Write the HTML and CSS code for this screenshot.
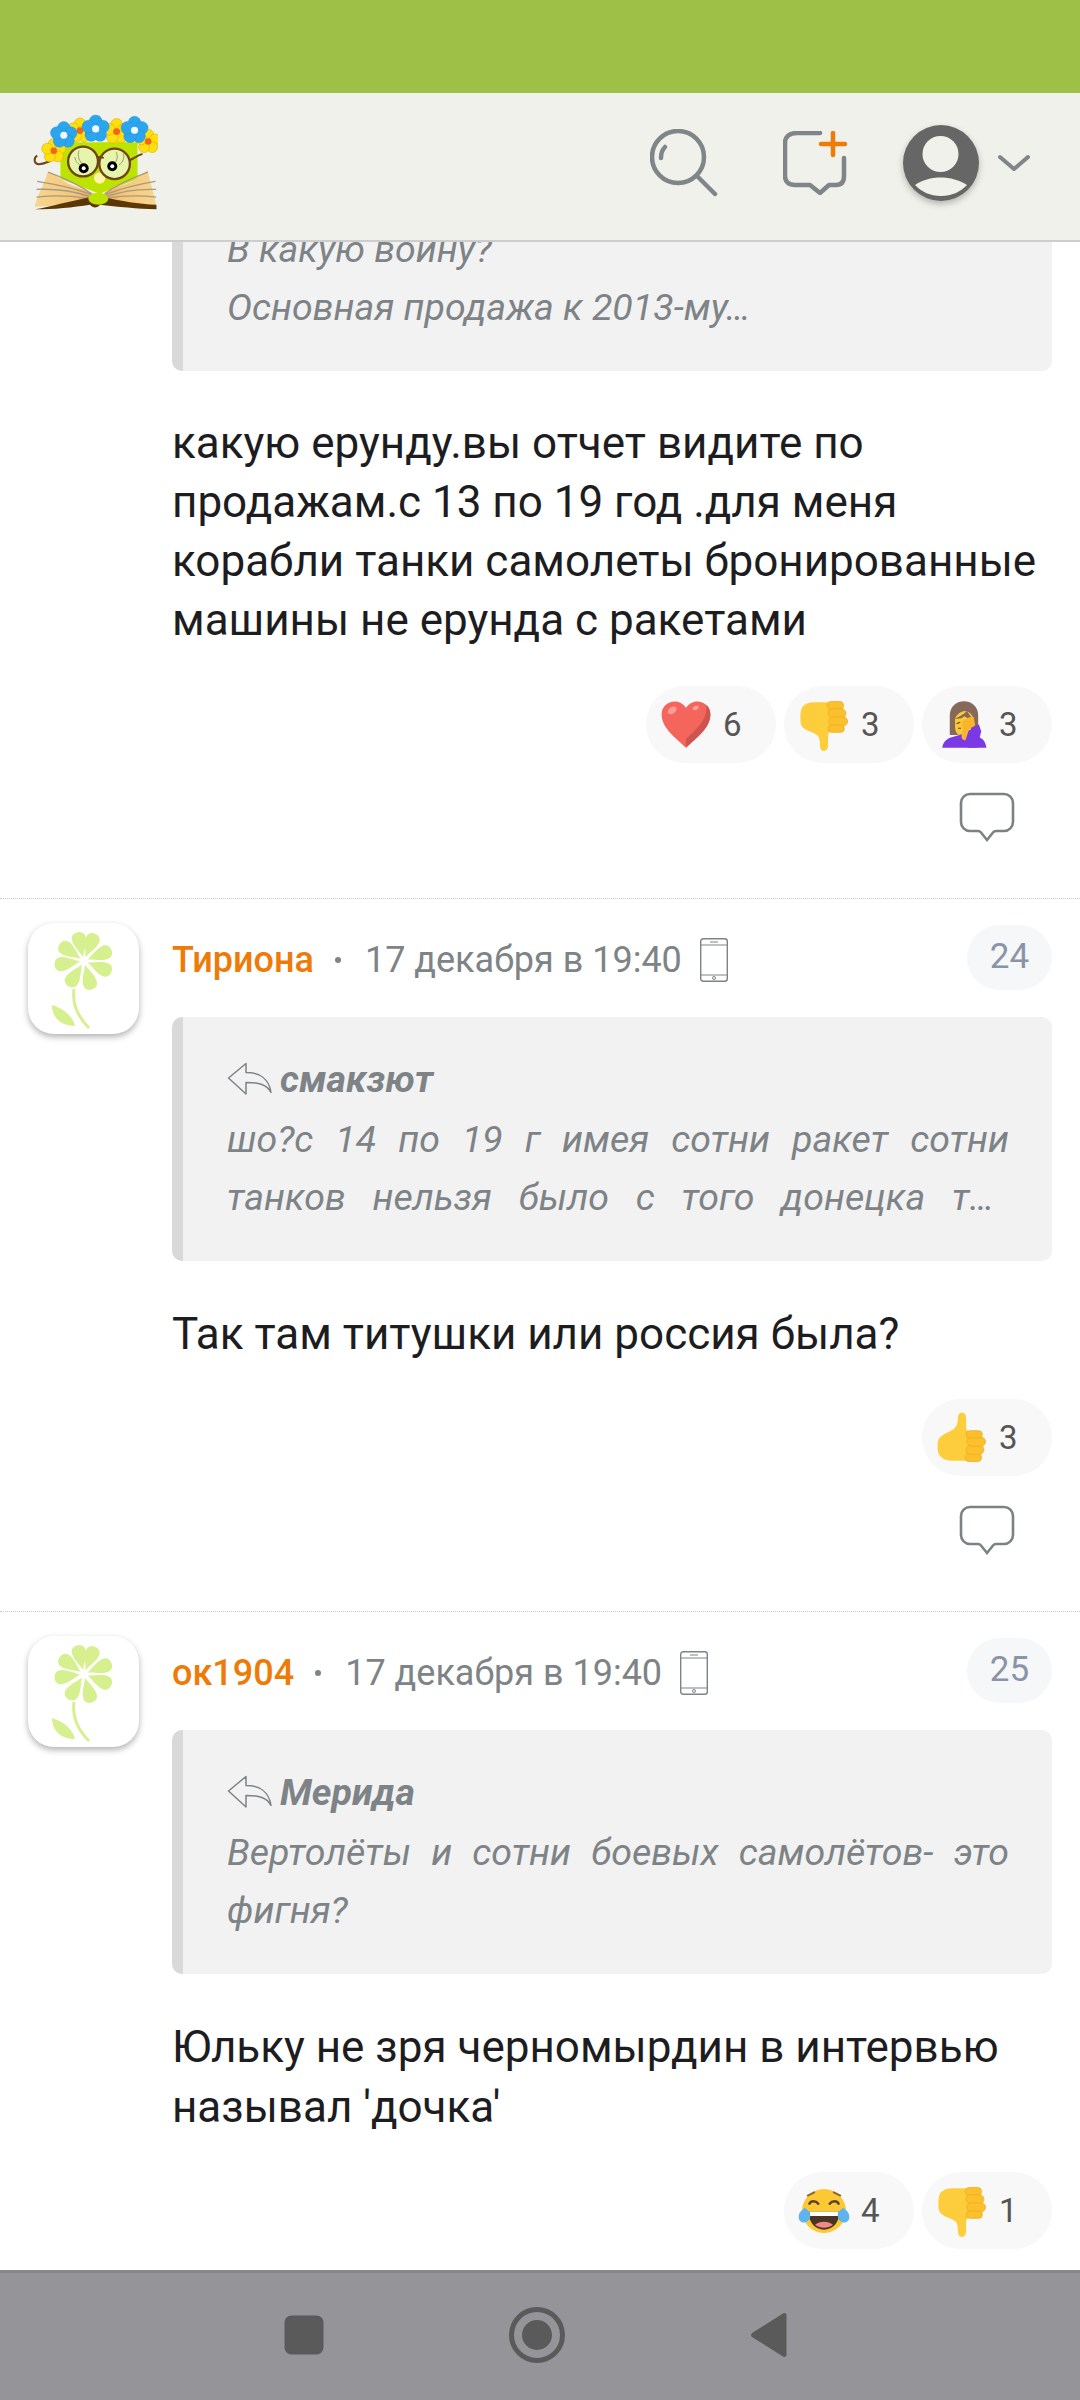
FILE: index.html
```html
<!DOCTYPE html>
<html lang="ru">
<head>
<meta charset="utf-8">
<title>Комментарии</title>
<link rel="stylesheet" href="styles.css">
</head>
<body>
<svg class="defs" width="0" height="0" aria-hidden="true">
  <defs>
    <linearGradient id="pageL" x1="0" x2="1" y1="0" y2="0"><stop offset="0" stop-color="#f7d68e"/><stop offset="0.6" stop-color="#f6c67a"/><stop offset="1" stop-color="#f49a3c"/></linearGradient>
    <linearGradient id="pageR" x1="1" x2="0" y1="0" y2="0"><stop offset="0" stop-color="#f7d68e"/><stop offset="0.6" stop-color="#f6c67a"/><stop offset="1" stop-color="#f49a3c"/></linearGradient>
    <symbol id="fl-blue" viewBox="-40 -40 80 80">
      <g fill="#2aa5ee" stroke="#1d8fd6" stroke-width="1"><circle cx="0" cy="-19" r="16"/><circle cx="18" cy="-6" r="16"/><circle cx="11" cy="15" r="16"/><circle cx="-11" cy="15" r="16"/><circle cx="-18" cy="-6" r="16"/></g>
      <circle r="9" fill="#f4fbff"/>
    </symbol>
    <symbol id="fl-yel" viewBox="-40 -40 80 80">
      <g fill="#ffdf10" stroke="#d9a900" stroke-width="1.5"><circle cx="0" cy="-19" r="15"/><circle cx="18" cy="-6" r="15"/><circle cx="11" cy="15" r="15"/><circle cx="-11" cy="15" r="15"/><circle cx="-18" cy="-6" r="15"/></g>
      <circle r="9" fill="#f0661a"/>
    </symbol>
    <symbol id="i-down" viewBox="0 0 64 64">
      <path d="M6 9c3-3 8-5 14-5h21c3 0 5 2 5 4v25l-5 5c-2 2-4 4-4 8v11c0 4-2 7-5 7-4 0-5-4-5-8 0-6-1-10-4-12-6-4-13-5-17-9-3-3-3-7-3-12 0-5 0-10 3-14z" fill="#fdcd3c"/>
      <g fill="#fbc02d" stroke="#f2ae1f" stroke-width="1"><rect x="36" y="3" width="20" height="10" rx="5"/><rect x="37" y="12" width="22" height="11" rx="5.5"/><rect x="38" y="22" width="23" height="11" rx="5.5"/><rect x="37" y="32" width="20" height="9" rx="4.5"/></g>
    </symbol>
    <symbol id="i-up" viewBox="0 0 64 64">
      <path d="M6 55c3 3 8 5 14 5h21c3 0 5-2 5-4V31l-5-5c-3-3-4-5-4-9V7c0-4-2-6-5-6-4 0-5 3-5 7 0 6-2 10-5 13-6 4-13 6-17 10-3 3-3 7-3 11 0 5 0 9 4 13z" fill="#fdcd3c"/>
      <g fill="#fbc02d" stroke="#f2ae1f" stroke-width="1"><rect x="36" y="51" width="20" height="10" rx="5"/><rect x="37" y="41" width="22" height="11" rx="5.5"/><rect x="38" y="31" width="23" height="11" rx="5.5"/><rect x="37" y="23" width="20" height="9" rx="4.5"/></g>
    </symbol>
    <symbol id="i-chat" viewBox="0 0 56 52">
      <path d="M11 2h34a9 9 0 0 1 9 9v19a9 9 0 0 1-9 9h-8a4 4 0 0 0-3 1.5L28 48l-6-7.500a4 4 0 0 0-3-1.500h-8a9 9 0 0 1-9-9V11a9 9 0 0 1 9-9z" fill="none" stroke="#7b8284" stroke-width="2.600"/>
    </symbol>
    <symbol id="i-phone" viewBox="0 0 28 44">
      <rect x="0.700" y="0.700" width="26.600" height="42.600" rx="2.500" fill="none" stroke="#7d8386" stroke-width="1.400"/>
      <path d="M1 7h26M1 37h26M10 4h8" fill="none" stroke="#7d8386" stroke-width="1.200"/>
      <circle cx="14" cy="40" r="1.500" fill="none" stroke="#7d8386"/>
    </symbol>
    <symbol id="i-reply" viewBox="0 0 46 34">
      <path d="M1.500 16 19 1.500v9c13 0 23 6 25 20-4-8-12-10-25-10v11.500z" fill="none" stroke="#7d8386" stroke-width="1.500" stroke-linejoin="round"/>
    </symbol>
    <path id="petal" d="M0-4C-2-10-7.500-17-7-24-6.500-31.500 6.500-31.500 7-24 7.500-17 2-10 0-4z" fill="#d7f08f"/>
    <symbol id="i-flower" viewBox="0 0 111 111">
      <g transform="translate(56 38)">
        <use href="#petal" transform="rotate(-13)"/>
        <use href="#petal" transform="rotate(22)"/>
        <use href="#petal" transform="rotate(68)"/>
        <use href="#petal" transform="rotate(112)"/>
        <use href="#petal" transform="rotate(165)"/>
        <use href="#petal" transform="rotate(212)"/>
        <use href="#petal" transform="rotate(262)"/>
        <use href="#petal" transform="rotate(305)"/>
      </g>
      <path d="M46 66c-2 15 4 28 15 39" fill="none" stroke="#d7f08f" stroke-width="3"/>
      <path d="M24 82c13 4 21 12 23 21-13 0-23-7-23-21z" fill="#d7f08f"/>
    </symbol>
  </defs>
</svg>

<div class="statusbar"></div>

<header class="topbar">
  <svg class="logo" viewBox="40 65 375 295" width="125" height="98" role="img" aria-label="Логотип">
    <path d="M52 190c-12 8-10 26 5 26 14 0 24-6 36-10" fill="none" stroke="#6e4513" stroke-width="6"/>
    <path d="M122 150h232v110l-114 45-118-45z" fill="#bde400"/>
    <path d="M45 345c3-30 30-70 38-105 30 10 42 25 72 39 30 13 65 20 85 40-30 0-60 10-85 18-40 5-80 5-110 8z" fill="url(#pageL)"/>
    <path d="M410 345c-2-30-18-70-25-110-30 16-40 34-75 44-30 10-50 20-70 40 30 0 60 10 85 18 30 5 60 5 85 8z" fill="url(#pageR)"/>
    <g stroke="#a59a85" stroke-width="4" fill="none"><path d="M85 240c40 15 90 35 130 65"/><path d="M52 268c50 8 110 20 165 40"/><path d="M50 292c50-2 110 4 160 22"/><path d="M50 315c50-5 100-5 150 4"/><path d="M385 240c-40 15-90 35-130 65"/><path d="M408 268c-50 8-100 20-150 40"/><path d="M410 292c-50-2-100 4-150 22"/><path d="M410 315c-50-5-100-5-150 4"/></g>
    <path d="M45 352c50-10 110-25 160-36 10 10 40 10 50 0 50 10 100 20 156 22v14c-55-2-120-8-170-14-8 10-20 12-30 0-50 8-110 14-166 14z" fill="#5b3706"/>
    <ellipse cx="236" cy="320" rx="30" ry="18" fill="#bde400"/>
    <ellipse cx="240" cy="258" rx="17" ry="17" fill="#fff3a8"/>
    <g stroke="#6e4513" stroke-width="7" fill="#e6f5ab"><circle cx="190" cy="208" r="45"/><circle cx="285" cy="215" r="46"/></g>
    <path d="M232 198c8-6 12-6 20 0M329 205c15-6 25-16 40-20" fill="none" stroke="#6e4513" stroke-width="6"/>
    <g fill="none" stroke="#9a9a6a" stroke-width="3"><path d="M165 195c4 15 10 20 18 25M178 175c-6 15 0 35 14 42M290 180c6 14 2 26-6 34M310 180c6 14 2 30-12 38"/></g>
    <circle cx="192" cy="228" r="15" fill="#000"/><circle cx="192" cy="228" r="6" fill="#fff"/>
    <circle cx="278" cy="222" r="15" fill="#000"/><circle cx="278" cy="222" r="6" fill="#fff"/>
    <use href="#fl-yel" x="58" y="132" width="88" height="88"/>
    <use href="#fl-yel" x="342" y="104" width="88" height="88"/>
    <use href="#fl-yel" x="136" y="70" width="90" height="90"/>
    <use href="#fl-yel" x="245" y="72" width="92" height="92"/>
    <use href="#fl-blue" x="85" y="82" width="94" height="94"/>
    <use href="#fl-blue" x="180" y="62" width="96" height="96"/>
    <use href="#fl-blue" x="297" y="66" width="96" height="96"/>
  </svg>
  <div class="actions">
    <svg class="a-search" viewBox="0 0 68 68" width="68" height="68" role="img" aria-label="Поиск">
      <g fill="none" stroke="#7f8588" stroke-width="4.500" stroke-linecap="round"><circle cx="28" cy="28" r="26"/><path d="M47 47l18 18"/><path d="M11 29c0-4 1-8 4-11"/></g>
    </svg>
    <svg class="a-chat" viewBox="0 0 64 64" width="64" height="64" role="img" aria-label="Новая тема">
      <path d="M37 2H14C6 2 2 6 2 12v33c0 6 4 9 10 9h15l10 8 9-8h7c5 0 8-3 8-9V27" fill="none" stroke="#7f8588" stroke-width="4.500" stroke-linecap="round" stroke-linejoin="round"/>
      <path d="M50 2v22M38 13h24" fill="none" stroke="#ee7b07" stroke-width="4.500" stroke-linecap="round"/>
    </svg>
    <svg class="a-user" viewBox="0 0 78 78" width="78" height="78" role="img" aria-label="Профиль">
      <circle cx="39" cy="39" r="38" fill="#666"/>
      <circle cx="38.500" cy="30" r="18" fill="#f0f1ea"/>
      <path d="M13 61c14-10 37-10 52 0-7 7-15 11-26 11-11 0-19-4-26-11z" fill="#f0f1ea"/>
    </svg>
    <svg class="a-chev" viewBox="0 0 32 18" width="32" height="18" aria-hidden="true">
      <path d="M2 3l14 12L30 3" fill="none" stroke="#7f8588" stroke-width="4" stroke-linecap="round" stroke-linejoin="round"/>
    </svg>
  </div>
</header>

<main class="feed">
  <article class="comment comment-first">
    <div class="body">
      <blockquote class="quote">
        <p class="q-line">В какую войну?</p>
        <p class="q-line">Основная продажа к 2013-му…</p>
      </blockquote>
      <p class="text text-long">какую ерунду.вы отчет видите по<br>продажам.с 13 по 19 год .для меня<br>корабли танки самолеты бронированные<br>машины не ерунда с ракетами</p>
      <div class="reactions">
        <div class="pill"><svg class="emoji" viewBox="0 0 64 64"><path d="M32 60C20 48 2 36 2 19 2 9 10 3 18 3c6 0 11 3 14 8 3-5 8-8 14-8 8 0 16 6 16 16 0 17-18 29-30 41z" fill="#f4655c"/><path d="M32 60c12-12 30-24 30-41 0-5-2-9-5-12 2 15-8 27-25 42z" fill="#cf5450"/><ellipse cx="15" cy="14" rx="6" ry="4" fill="#fb9c96" transform="rotate(-35 15 14)"/><ellipse cx="44" cy="11" rx="4" ry="2.500" fill="#fb9c96" transform="rotate(-25 44 11)"/></svg><span class="num">6</span></div>
        <div class="pill"><svg class="emoji"><use href="#i-down"/></svg><span class="num">3</span></div>
        <div class="pill"><svg class="emoji" viewBox="0 0 64 64"><g transform="translate(5 2) scale(.92)"><path d="M13 46V20C13 7 23 1 32 1s19 6 19 19v26z" fill="#86695a"/><path d="M20 26c0-4 4-10 12-12 8 0 12 6 13 13v10c0 8-6 12-12 12-8 0-13-6-13-14z" fill="#fcc934"/><path d="M20 24c6-2 12-6 16-10l9 13c-6-2-10-4-12-6-4 3-8 4-13 3z" fill="#86695a"/><path d="M22 31l5-2M24 37h4" stroke="#5d4324" stroke-width="1.500" fill="none"/><path d="M3 63c1-8 6-13 16-15l10-3 6-4 12-4 5 12c6 2 9 7 10 14z" fill="#7b39e6"/><path d="M30 28c5-4 9-7 15-6l2 11-8 5-5 15c-4 0-6-3-5-8l2-8c-3-2-2-6-1-9z" fill="#fab52c"/><path d="M36 53l6-17 10-4 3 9-5 22H37z" fill="#7b39e6"/></g></svg><span class="num">3</span></div>
      </div>
      <div class="reply-row"><svg class="chat"><use href="#i-chat"/></svg></div>
    </div>
  </article>

  <article class="comment">
    <div class="avatar"><svg class="flower"><use href="#i-flower"/></svg></div>
    <div class="body">
      <div class="head">
        <span class="name">Тириона</span><span class="dot"></span><span class="date">17 декабря в 19:40</span><svg class="phone"><use href="#i-phone"/></svg>
        <span class="no">24</span>
      </div>
      <blockquote class="quote">
        <div class="q-author"><svg class="q-icon"><use href="#i-reply"/></svg><b>смакзют</b></div>
        <p class="q-line q-just">шо?с 14 по 19 г имея сотни ракет сотни</p>
        <p class="q-line q-just q-short">танков нельзя было с того донецка т…</p>
      </blockquote>
      <p class="text">Так там титушки или россия была?</p>
      <div class="reactions">
        <div class="pill"><svg class="emoji"><use href="#i-up"/></svg><span class="num">3</span></div>
      </div>
      <div class="reply-row"><svg class="chat"><use href="#i-chat"/></svg></div>
    </div>
  </article>

  <article class="comment">
    <div class="avatar"><svg class="flower"><use href="#i-flower"/></svg></div>
    <div class="body">
      <div class="head">
        <span class="name">ок1904</span><span class="dot"></span><span class="date">17 декабря в 19:40</span><svg class="phone"><use href="#i-phone"/></svg>
        <span class="no">25</span>
      </div>
      <blockquote class="quote">
        <div class="q-author"><svg class="q-icon"><use href="#i-reply"/></svg><b>Мерида</b></div>
        <p class="q-line q-just">Вертолёты и сотни боевых самолётов- это</p>
        <p class="q-line">фигня?</p>
      </blockquote>
      <p class="text">Юльку не зря черномырдин в интервью<br>называл 'дочка'</p>
      <div class="reactions">
        <div class="pill"><svg class="emoji" viewBox="0 0 64 64"><circle cx="32" cy="32" r="27" fill="#fcc934"/><path d="M13 33h38c0 13-8 22-19 22S13 46 13 33z" fill="#4a3524"/><path d="M14 33h36l-1 5H15z" fill="#fff"/><path d="M21 49c6-5 16-5 22 0-6 5-16 5-22 0z" fill="#f18a8a"/><path d="M14 23c2-4 8-4 11 0M39 23c3-4 9-4 11 0" fill="none" stroke="#5d4324" stroke-width="3" stroke-linecap="round"/><path d="M12 13l8-4M52 13l-8-4" stroke="#8a6a2c" stroke-width="2.500" stroke-linecap="round"/><path d="M8 28c4 2 7 6 7 10 0 5-4 8-8 8s-7-4-6-8c0-4 4-7 7-10zM56 28c-4 2-7 6-7 10 0 5 4 8 8 8s7-4 6-8c0-4-4-7-7-10z" fill="#5eb4f0"/></svg><span class="num">4</span></div>
        <div class="pill"><svg class="emoji"><use href="#i-down"/></svg><span class="num">1</span></div>
      </div>
    </div>
  </article>
</main>

<nav class="navbar">
  <svg viewBox="0 0 40 40" width="40" height="40" class="n-square" aria-label="Недавние"><rect x="0.500" y="0.500" width="39" height="39" rx="7" fill="#5a5a5a"/></svg>
  <svg viewBox="0 0 56 56" width="56" height="56" class="n-home" aria-label="Домой"><circle cx="28" cy="28" r="25.500" fill="none" stroke="#5a5a5a" stroke-width="5"/><circle cx="28" cy="28" r="15" fill="#5a5a5a"/></svg>
  <svg viewBox="0 0 38 46" width="38" height="46" class="n-back" aria-label="Назад"><path d="M33 1.500 2 21a2.500 2.500 0 0 0 0 4l31 19.500c2 1 3.500 0 3.500-2V3.500c0-2-1.500-3-3.500-2z" fill="#5a5a5a"/></svg>
</nav>
</body>
</html>
```

FILE: styles.css
```css
* { box-sizing: border-box; }
html, body { margin: 0; padding: 0; }
body {
  width: 1080px;
  height: 2400px;
  display: flex;
  flex-direction: column;
  overflow: hidden;
  background: #fff;
  font-family: Roboto, "Liberation Sans", sans-serif;
  color: #1d1d1f;
}
.defs { position: absolute; }
.statusbar { height: 93px; flex: none; background: #9fc046; }

.topbar {
  flex: none;
  height: 149px;
  display: flex;
  align-items: center;
  padding: 0 50px 7px 33px;
  background: #f0f1ea;
  border-bottom: 2px solid #cdcdcd;
}
.logo { flex: none; }
.actions { margin-left: auto; display: flex; align-items: center; }
.a-search { margin-right: 65px; }
.a-chat { margin-right: 55px; }
.a-user { margin-right: 18px; filter: drop-shadow(0 3px 3px rgba(0,0,0,.25)); }

.feed { flex: 1; min-height: 0; overflow: hidden; }
.comment {
  display: flex;
  padding: 24px 28px 54px 28px;
  border-top: 1px dotted #c9c9c9;
}
.comment-first {
  border-top: 0;
  padding-top: 0;
  padding-left: 172px;
  margin-top: -57px;
}
.avatar {
  flex: none;
  width: 111px;
  height: 111px;
  margin-right: 33px;
  border-radius: 26px;
  background: #fff;
  box-shadow: 0 3px 6px rgba(0,0,0,.3);
}
.flower { display: block; width: 111px; height: 111px; }
.body { flex: 1; min-width: 0; }

.head {
  display: flex;
  align-items: center;
  height: 65px;
  margin: 2px 0 27px;
  font-size: 36px;
}
.name { padding-top: 5px; font-weight: 500; color: #ee7b07; }
.dot { width: 6px; height: 6px; margin: 5px 24px 0 21px; border-radius: 50%; background: #7d8386; }
.date { padding-top: 5px; color: #7d8386; }
.phone { width: 28px; height: 44px; margin: 5px 0 0 18px; }
.no {
  margin-left: auto;
  width: 85px;
  height: 65px;
  display: flex;
  align-items: center;
  justify-content: center;
  padding-bottom: 2px;
  border-radius: 33px;
  background: #f6f7f8;
  color: #8a94a8;
  font-size: 35px;
}

.quote {
  margin: 0 0 43px;
  padding: 35px 43px 35px 44px;
  background: #f2f2f2;
  border-left: 11px solid #d9d9d9;
  border-radius: 10px;
  color: #7d8386;
  font-size: 37.5px;
  line-height: 58px;
  font-style: italic;
}
.q-author { display: flex; align-items: center; height: 58px; padding-bottom: 5px; }
.q-author b { font-weight: 700; }
.q-icon { width: 46px; height: 34px; margin-right: 7px; }
.q-line { margin: 0; }
.q-just { text-align: justify; text-align-last: justify; }
.q-short { margin-right: 15px; }

.text {
  margin: 0;
  font-size: 44px;
  line-height: 60px;
  color: #1d1d1f;
}
.text-long { line-height: 59px; padding-bottom: 1px; }
.reactions { display: flex; justify-content: flex-end; gap: 8px; margin-top: 35px; }
.pill {
  width: 130px;
  height: 77px;
  display: flex;
  align-items: center;
  padding-left: 14px;
  border-radius: 39px;
  background: #f8f8f8;
}
.emoji { width: 52px; height: 52px; flex: none; }
.num { margin-left: 11px; font-size: 33px; color: #555; }
.reply-row { display: flex; justify-content: flex-end; padding-right: 37px; margin-top: 29px; }
.chat { display: block; width: 56px; height: 52px; }

.navbar {
  flex: none;
  height: 130px;
  display: flex;
  align-items: center;
  padding: 0 292px 4px 284px;
  justify-content: space-between;
  background: #959499;
  border-top: 3px solid #87868b;
}
```
